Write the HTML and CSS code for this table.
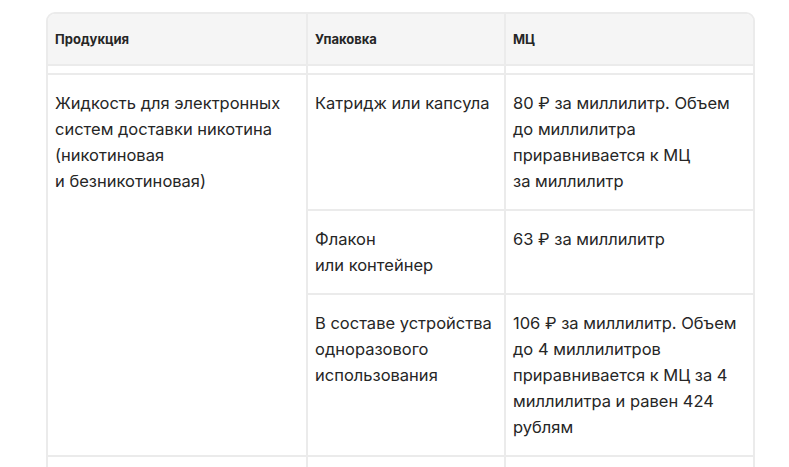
FILE: index.html
```html
<!DOCTYPE html>
<html lang="ru">
<head>
<meta charset="utf-8">
<title>МЦ</title>
<link rel="stylesheet" href="styles.css">
</head>
<body>
<div class="wrap">
  <table class="tbl">
    <colgroup>
      <col class="c1"><col class="c2"><col class="c3">
    </colgroup>
    <thead>
      <tr>
        <th>Продукция</th>
        <th>Упаковка</th>
        <th>МЦ</th>
      </tr>
    </thead>
    <tbody>
      <tr class="spacer"><td></td><td></td><td></td></tr>
      <tr>
        <td rowspan="3">Жидкость для электронных систем доставки никотина (никотиновая<br>и безникотиновая)</td>
        <td>Катридж или капсула</td>
        <td>80 ₽ за миллилитр. Объем до миллилитра приравнивается к МЦ<br>за миллилитр</td>
      </tr>
      <tr>
        <td>Флакон<br>или контейнер</td>
        <td>63 ₽ за миллилитр</td>
      </tr>
      <tr>
        <td>В составе устройства одноразового использования</td>
        <td>106 ₽ за миллилитр. Объем до 4 миллилитров приравнивается к МЦ за 4 миллилитра и равен 424 рублям</td>
      </tr>
      <tr class="next"><td></td><td></td><td></td></tr>
    </tbody>
  </table>
</div>
</body>
</html>
```
FILE: styles.css
```css
html, body {
  margin: 0;
  padding: 0;
  height: 467px;
  overflow: hidden;
  background: #fff;
}
body {
  font-family: "Inter", "Noto Sans", sans-serif;
  color: #262626;
}
.wrap {
  margin: 12px 0 0 46px;
  width: 709px;
  box-sizing: border-box;
  border: 2px solid #ebebeb;
  border-radius: 9px;
  overflow: hidden;
}
.tbl {
  width: 705px;
  table-layout: fixed;
  border-collapse: separate;
  border-spacing: 0;
}
.c1 { width: 260px; }
.c2 { width: 198px; }
.c3 { width: 247px; }
.tbl th, .tbl td {
  box-sizing: border-box;
  vertical-align: top;
  text-align: left;
  border-right: 2px solid #ebebeb;
  border-bottom: 2px solid #ebebeb;
}
.tbl th:last-child, .tbl td:last-child { border-right: 0; }
.tbl th {
  background: #f5f5f5;
  font-size: 13px;
  font-weight: 700;
  height: 52px;
  padding: 0 7px;
  vertical-align: middle;
}
.tbl td {
  font-size: 16.5px;
  line-height: 26px;
  padding: 15px 6px 15px 7px;
}
.tbl .spacer td {
  height: 9px;
  padding: 0;
}
.tbl .next td {
  height: 40px;
  padding: 0;
}
```
